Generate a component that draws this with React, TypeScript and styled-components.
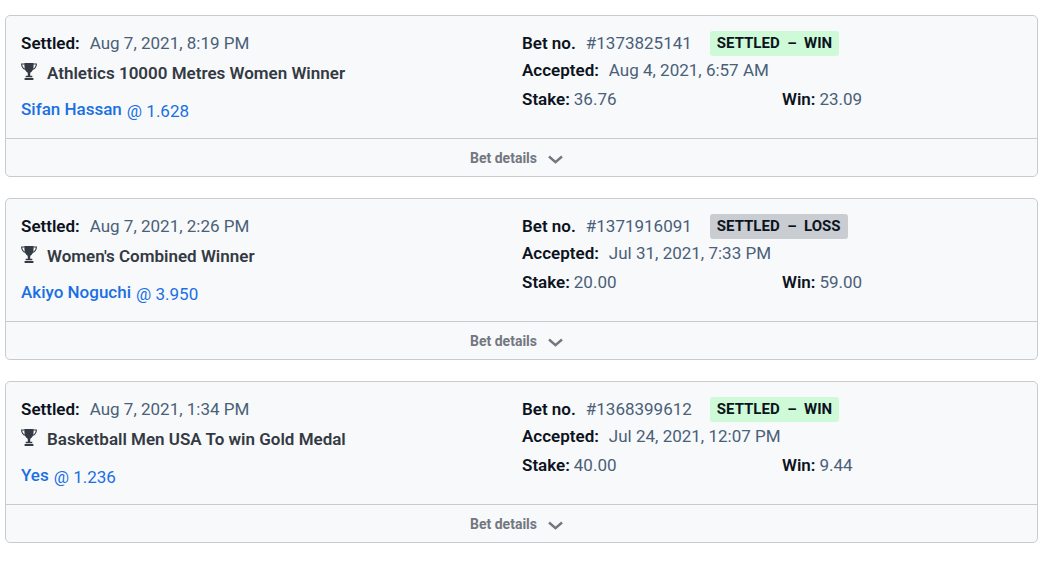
import React from "react";
import styled, { createGlobalStyle } from "styled-components";

const GlobalStyle = createGlobalStyle`
  *, *::before, *::after { box-sizing: border-box; }
  body {
    margin: 0;
    background: #ffffff;
    color: #0b1320;
    font-family: Roboto, "Liberation Sans", sans-serif;
    font-size: 17px;
    line-height: 25px;
  }
`;

const BetList = styled.main`
  display: flex;
  flex-direction: column;
  gap: 21px;
  padding: 15px 8px 17px 5px;
`;

const Card = styled.article`
  background: #f8f9fb;
  border: 1px solid #c9cccf;
  border-radius: 5px;
  overflow: hidden;
`;

const CardBody = styled.div`
  display: grid;
  grid-template-columns: 1fr 1fr;
  padding: 15px 0 14px 15px;
`;

const Selection = styled.section`
  display: flex;
  flex-direction: column;
`;

const Summary = styled.section`
  display: flex;
  flex-direction: column;
  gap: 2px;
  margin-left: -7px;
`;

const Field = styled.div<{ $gap?: number }>`
  display: flex;
  align-items: center;
  gap: ${(p) => p.$gap ?? 10}px;
`;

const Label = styled.span`
  font-weight: 600;
`;

const Value = styled.span`
  color: #4a5f78;
`;

const EventRow = styled.div`
  display: flex;
  align-items: flex-start;
  gap: 10px;
  margin-top: 5px;
`;

const EventName = styled.h2`
  margin: 0;
  font-size: 17px;
  font-weight: 600;
  color: #343a43;
`;

const Pick = styled.a`
  display: flex;
  align-items: flex-start;
  gap: 5px;
  margin-top: 11px;
  color: #1a70e2;
  text-decoration: none;
`;

const PickName = styled.strong`
  font-weight: 500;
`;

const Odds = styled.span`
  padding-top: 2px;
`;

const Badge = styled.span<{ $win: boolean }>`
  margin-left: 8px;
  padding: 0 7px;
  border-radius: 3px;
  background: ${(p) => (p.$win ? "#cffad7" : "#c9ccd1")};
  font-size: 15px;
  font-weight: 700;
  white-space: pre;
`;

const Amounts = styled.div`
  display: grid;
  grid-template-columns: 1fr 1fr;
  column-gap: 5px;
  margin-top: 2px;
`;

const DetailsButton = styled.button`
  display: flex;
  align-items: center;
  justify-content: center;
  gap: 11px;
  width: 100%;
  height: 38px;
  padding: 2px 10px 0 0;
  border: 0;
  border-top: 1px solid #c9cccf;
  background: transparent;
  color: #72777f;
  font: inherit;
  font-size: 14px;
  font-weight: 700;
  cursor: pointer;
`;

const Trophy = styled.svg`
  flex: none;
  margin-top: 2px;
`;

const Chevron = styled.svg`
  flex: none;
  margin-top: 1px;
`;

const TrophyIcon = () => (
  <Trophy width="16" height="17" viewBox="0 0 16 17" fill="#343a43" aria-hidden="true">
    <path d="M3.400 0h9.200v2.500c0 3.800-1.300 6.400-3.300 7.300L9.100 13.500H6.900L6.700 9.800c-2-.9-3.300-3.500-3.300-7.300z" />
    <path d="M3.800 1H.600c.1 2.700 1.400 4.700 4.100 5.500M12.200 1h3.200c-.1 2.700-1.400 4.700-4.100 5.500" fill="none" stroke="#343a43" strokeWidth="1.100" />
    <path d="M4.700 12.800h6.600v1.500H4.700zM3.600 15h8.800V17H3.600z" />
  </Trophy>
);

const ChevronIcon = () => (
  <Chevron width="15" height="9" viewBox="0 0 15 9" fill="none" stroke="#72777f" strokeWidth="2.400" aria-hidden="true">
    <path d="M1 1.500L7.500 7.200L14 1.500" />
  </Chevron>
);

interface Bet {
  id: string;
  settled: string;
  event: string;
  pick: string;
  odds: string;
  accepted: string;
  stake: string;
  win: string;
  result: "WIN" | "LOSS";
}

const bets: Bet[] = [
  { id: "1373825141", settled: "Aug 7, 2021, 8:19 PM", event: "Athletics 10000 Metres Women Winner", pick: "Sifan Hassan", odds: "1.628", accepted: "Aug 4, 2021, 6:57 AM", stake: "36.76", win: "23.09", result: "WIN" },
  { id: "1371916091", settled: "Aug 7, 2021, 2:26 PM", event: "Women's Combined Winner", pick: "Akiyo Noguchi", odds: "3.950", accepted: "Jul 31, 2021, 7:33 PM", stake: "20.00", win: "59.00", result: "LOSS" },
  { id: "1368399612", settled: "Aug 7, 2021, 1:34 PM", event: "Basketball Men USA To win Gold Medal", pick: "Yes", odds: "1.236", accepted: "Jul 24, 2021, 12:07 PM", stake: "40.00", win: "9.44", result: "WIN" },
];

const BetCard = ({ bet }: { bet: Bet }) => (
  <Card>
    <CardBody>
      <Selection>
        <Field>
          <Label>Settled:</Label>
          <Value>{bet.settled}</Value>
        </Field>
        <EventRow>
          <TrophyIcon />
          <EventName>{bet.event}</EventName>
        </EventRow>
        <Pick href="#">
          <PickName>{bet.pick}</PickName>
          <Odds>@ {bet.odds}</Odds>
        </Pick>
      </Selection>
      <Summary>
        <Field>
          <Label>Bet no.</Label>
          <Value>#{bet.id}</Value>
          <Badge $win={bet.result === "WIN"}>{`SETTLED  –  ${bet.result}`}</Badge>
        </Field>
        <Field>
          <Label>Accepted:</Label>
          <Value>{bet.accepted}</Value>
        </Field>
        <Amounts>
          <Field $gap={4}>
            <Label>Stake:</Label>
            <Value>{bet.stake}</Value>
          </Field>
          <Field $gap={4}>
            <Label>Win:</Label>
            <Value>{bet.win}</Value>
          </Field>
        </Amounts>
      </Summary>
    </CardBody>
    <DetailsButton type="button">
      Bet details
      <ChevronIcon />
    </DetailsButton>
  </Card>
);

export default function App() {
  return (
    <>
      <GlobalStyle />
      <BetList>
        {bets.map((bet) => (
          <BetCard key={bet.id} bet={bet} />
        ))}
      </BetList>
    </>
  );
}
